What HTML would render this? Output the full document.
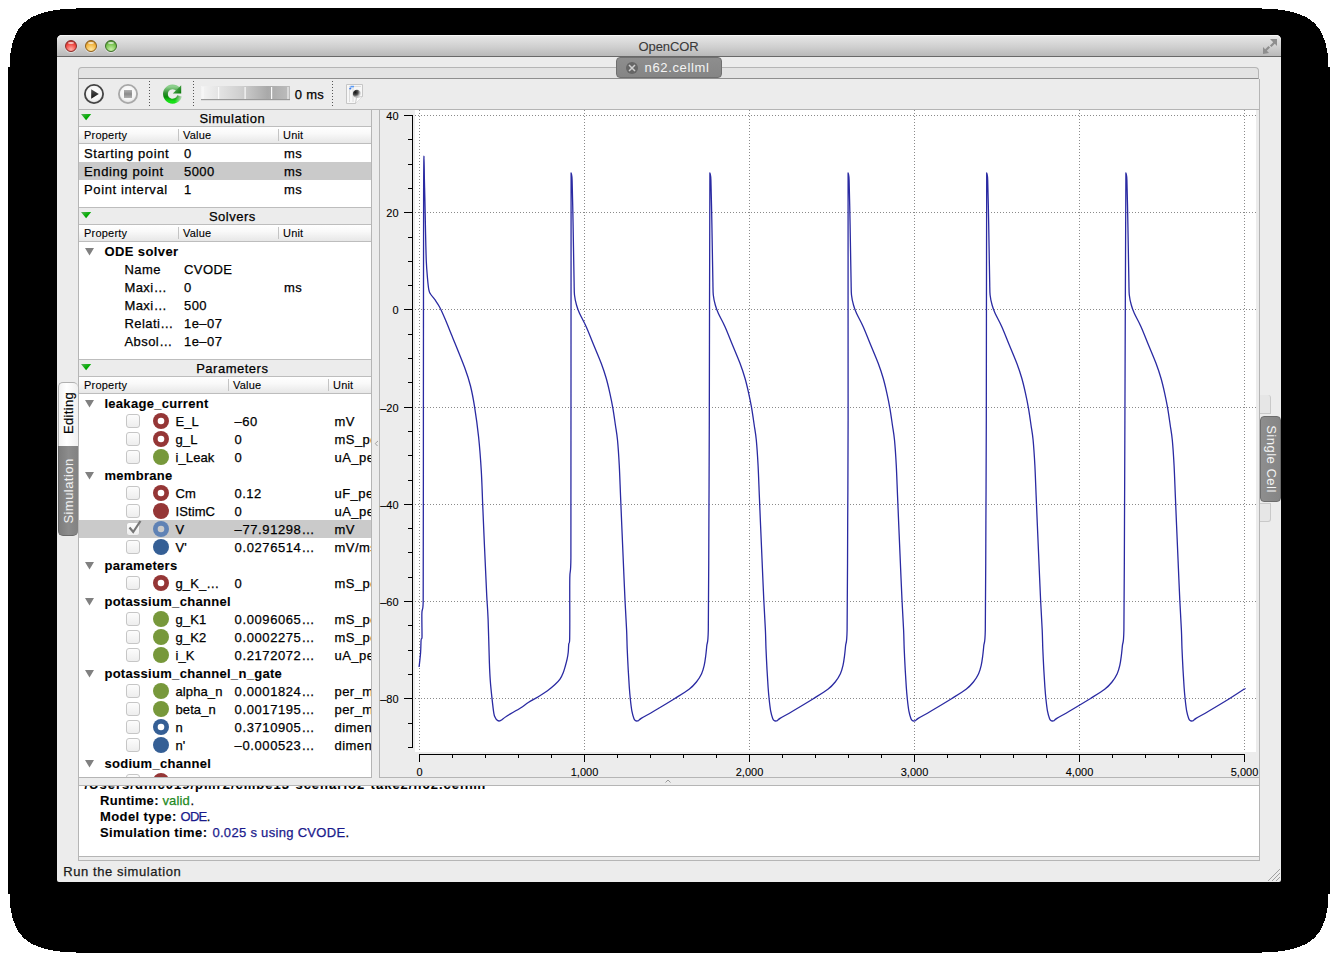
<!DOCTYPE html><html><head><meta charset="utf-8"><style>
html,body{margin:0;padding:0;width:1338px;height:961px;overflow:hidden;background:#fff;position:relative;}
.t{position:absolute;white-space:nowrap;font-family:"Liberation Sans",sans-serif;}
.r{position:absolute;box-sizing:border-box;}
svg{position:absolute;left:0;top:0;}
</style></head><body>
<svg width="1338" height="961"><path d="M1262,8 L1262,9 L1278,9 L1278,10 L1285,10 L1285,11 L1290,11 L1290,12 L1294,12 L1294,13 L1297,13 L1297,14 L1300,14 L1300,15 L1302,15 L1302,16 L1305,16 L1305,17 L1307,17 L1307,18 L1308,18 L1308,19 L1310,19 L1310,20 L1311,20 L1311,21 L1312,21 L1312,22 L1314,22 L1314,23 L1315,23 L1315,24 L1316,24 L1316,25 L1316,25 L1316,26 L1317,26 L1317,27 L1318,27 L1318,28 L1319,28 L1319,29 L1320,29 L1320,30 L1320,30 L1320,31 L1321,31 L1321,32 L1321,32 L1321,33 L1322,33 L1322,34 L1322,34 L1322,35 L1323,35 L1323,36 L1323,36 L1323,37 L1323,37 L1323,38 L1324,38 L1324,39 L1324,39 L1324,40 L1325,40 L1325,41 L1325,41 L1325,42 L1325,42 L1325,43 L1326,43 L1326,44 L1326,44 L1326,45 L1326,45 L1326,46 L1326,46 L1326,47 L1326,47 L1326,48 L1327,48 L1327,49 L1327,49 L1327,50 L1327,50 L1327,51 L1327,51 L1327,52 L1327,52 L1327,53 L1328,53 L1328,54 L1328,54 L1328,55 L1328,55 L1328,56 L1328,56 L1328,57 L1328,57 L1328,58 L1328,58 L1328,59 L1328,59 L1328,60 L1328,60 L1328,61 L1328,61 L1328,62 L1328,62 L1328,63 L1328,63 L1328,64 L1328,64 L1328,65 L1328,65 L1328,66 L1328,66 L1328,67 L1330,67 L1330,894 L1328,894 L1328,895 L1328,895 L1328,896 L1328,896 L1328,897 L1328,897 L1328,898 L1328,898 L1328,899 L1328,899 L1328,900 L1328,900 L1328,901 L1328,901 L1328,902 L1328,902 L1328,903 L1328,903 L1328,904 L1328,904 L1328,905 L1328,905 L1328,906 L1328,906 L1328,907 L1328,907 L1328,908 L1327,908 L1327,909 L1327,909 L1327,910 L1327,910 L1327,911 L1327,911 L1327,912 L1327,912 L1327,913 L1326,913 L1326,914 L1326,914 L1326,915 L1326,915 L1326,916 L1326,916 L1326,917 L1326,917 L1326,918 L1325,918 L1325,919 L1325,919 L1325,920 L1325,920 L1325,921 L1324,921 L1324,922 L1324,922 L1324,923 L1323,923 L1323,924 L1323,924 L1323,925 L1323,925 L1323,926 L1322,926 L1322,927 L1322,927 L1322,928 L1321,928 L1321,929 L1321,929 L1321,930 L1320,930 L1320,931 L1320,931 L1320,932 L1319,932 L1319,933 L1318,933 L1318,934 L1317,934 L1317,935 L1316,935 L1316,936 L1316,936 L1316,937 L1315,937 L1315,938 L1314,938 L1314,939 L1312,939 L1312,940 L1311,940 L1311,941 L1310,941 L1310,942 L1308,942 L1308,943 L1307,943 L1307,944 L1305,944 L1305,945 L1302,945 L1302,946 L1300,946 L1300,947 L1297,947 L1297,948 L1294,948 L1294,949 L1290,949 L1290,950 L1285,950 L1285,951 L1278,951 L1278,952 L1262,952 L1262,953 L76,953 L76,952 L60,952 L60,951 L53,951 L53,950 L48,950 L48,949 L44,949 L44,948 L41,948 L41,947 L38,947 L38,946 L36,946 L36,945 L33,945 L33,944 L31,944 L31,943 L30,943 L30,942 L28,942 L28,941 L27,941 L27,940 L26,940 L26,939 L24,939 L24,938 L23,938 L23,937 L22,937 L22,936 L22,936 L22,935 L21,935 L21,934 L20,934 L20,933 L19,933 L19,932 L18,932 L18,931 L18,931 L18,930 L17,930 L17,929 L17,929 L17,928 L16,928 L16,927 L16,927 L16,926 L15,926 L15,925 L15,925 L15,924 L15,924 L15,923 L14,923 L14,922 L14,922 L14,921 L13,921 L13,920 L13,920 L13,919 L13,919 L13,918 L12,918 L12,917 L12,917 L12,916 L12,916 L12,915 L12,915 L12,914 L12,914 L12,913 L11,913 L11,912 L11,912 L11,911 L11,911 L11,910 L11,910 L11,909 L11,909 L11,908 L10,908 L10,907 L10,907 L10,906 L10,906 L10,905 L10,905 L10,904 L10,904 L10,903 L10,903 L10,902 L10,902 L10,901 L10,901 L10,900 L10,900 L10,899 L10,899 L10,898 L10,898 L10,897 L10,897 L10,896 L10,896 L10,895 L10,895 L10,894 L8,894 L8,67 L10,67 L10,66 L10,66 L10,65 L10,65 L10,64 L10,64 L10,63 L10,63 L10,62 L10,62 L10,61 L10,61 L10,60 L10,60 L10,59 L10,59 L10,58 L10,58 L10,57 L10,57 L10,56 L10,56 L10,55 L10,55 L10,54 L10,54 L10,53 L11,53 L11,52 L11,52 L11,51 L11,51 L11,50 L11,50 L11,49 L11,49 L11,48 L12,48 L12,47 L12,47 L12,46 L12,46 L12,45 L12,45 L12,44 L12,44 L12,43 L13,43 L13,42 L13,42 L13,41 L13,41 L13,40 L14,40 L14,39 L14,39 L14,38 L15,38 L15,37 L15,37 L15,36 L15,36 L15,35 L16,35 L16,34 L16,34 L16,33 L17,33 L17,32 L17,32 L17,31 L18,31 L18,30 L18,30 L18,29 L19,29 L19,28 L20,28 L20,27 L21,27 L21,26 L22,26 L22,25 L22,25 L22,24 L23,24 L23,23 L24,23 L24,22 L26,22 L26,21 L27,21 L27,20 L28,20 L28,19 L30,19 L30,18 L31,18 L31,17 L33,17 L33,16 L36,16 L36,15 L38,15 L38,14 L41,14 L41,13 L44,13 L44,12 L48,12 L48,11 L53,11 L53,10 L60,10 L60,9 L76,9 L76,8 Z" fill="#000" shape-rendering="crispEdges"/></svg>
<div class="r" style="left:57px;top:35px;width:1224px;height:847px;background:#ececec;border-radius:5px 5px 2px 2px;overflow:hidden;"></div>
<div class="r" style="left:57px;top:35px;width:1224px;height:22px;background:linear-gradient(#e8e8e8,#d0d0d0 55%,#b9b9b9);border-radius:5px 5px 0 0;border-bottom:1px solid #686868;box-shadow:inset 0 1px 0 #f6f6f6;"></div>
<div class="r" style="left:65px;top:40px;width:12px;height:12px;border-radius:50%;background:radial-gradient(circle at 50% 85%, #ffb0a8 0%, #f0453e 60%, #8c2a26 100%);border:1px solid #8c2a26;box-shadow:0 1px 1px rgba(255,255,255,0.5);"></div>
<div class="r" style="left:68px;top:41.5px;width:6px;height:2.5px;border-radius:50%;background:rgba(255,255,255,0.65);"></div>
<div class="r" style="left:85px;top:40px;width:12px;height:12px;border-radius:50%;background:radial-gradient(circle at 50% 85%, #ffe7a0 0%, #f2b33d 60%, #8f5e17 100%);border:1px solid #8f5e17;box-shadow:0 1px 1px rgba(255,255,255,0.5);"></div>
<div class="r" style="left:88px;top:41.5px;width:6px;height:2.5px;border-radius:50%;background:rgba(255,255,255,0.65);"></div>
<div class="r" style="left:105px;top:40px;width:12px;height:12px;border-radius:50%;background:radial-gradient(circle at 50% 85%, #c8f0a8 0%, #77c34e 60%, #3a6d25 100%);border:1px solid #3a6d25;box-shadow:0 1px 1px rgba(255,255,255,0.5);"></div>
<div class="r" style="left:108px;top:41.5px;width:6px;height:2.5px;border-radius:50%;background:rgba(255,255,255,0.65);"></div>
<div class="t" style="left:638.50px;top:40.00px;font-size:13px;line-height:13px;font-weight:400;color:#3a3a3a;letter-spacing:-0.098px;-webkit-text-stroke:0.1px currentColor;">OpenCOR</div>
<svg width="1338" height="961" style="pointer-events:none"><g fill="#8e8e8e">
<path d="M1270,39 L1277,39 L1277,46 L1274.8,43.8 L1271.5,47.1 L1269.9,45.5 L1273.2,42.2 Z"/>
<path d="M1263,53 L1263,46 L1265.2,48.2 L1268.5,44.9 L1270.1,46.5 L1266.8,49.8 L1269,52 Z" transform="translate(0,1)"/>
</g></svg>
<div class="r" style="left:78px;top:67px;width:1181px;height:12px;background:#e3e3e3;border:1px solid #b5b5b5;border-bottom:1px solid #8e8e8e;border-radius:4px 4px 0 0;"></div>
<div class="r" style="left:616px;top:57px;width:106px;height:21px;background:linear-gradient(#8e8e8e,#858585);border:1px solid #6f6f6f;border-radius:4px;"></div>
<div class="r" style="left:626px;top:62px;width:12px;height:12px;border-radius:50%;background:#666;"></div>
<svg width="1338" height="961"><path d="M629,65 L635,71 M635,65 L629,71" stroke="#cfcfcf" stroke-width="1.5"/></svg>
<div class="t" style="left:644.50px;top:61.00px;font-size:13px;line-height:13px;font-weight:400;color:#f4f4f4;letter-spacing:0.648px;-webkit-text-stroke:0;">n62.cellml</div>
<div class="r" style="left:78px;top:79px;width:1182px;height:782px;border:1px solid #b5b5b5;border-top:none;background:#ececec;"></div>
<div class="r" style="left:79px;top:109px;width:1180px;height:1px;background:#b4b4b4;"></div>
<svg width="1338" height="961"><defs>
<radialGradient id="btnfill" cx="50%" cy="40%" r="60%"><stop offset="0" stop-color="#ffffff"/><stop offset="0.7" stop-color="#f4f4f4"/><stop offset="1" stop-color="#d8d8d8"/></radialGradient>
<linearGradient id="playtri" x1="0" y1="0" x2="0" y2="1"><stop offset="0" stop-color="#555"/><stop offset="1" stop-color="#111"/></linearGradient>
<linearGradient id="stopsq" x1="0" y1="0" x2="0" y2="1"><stop offset="0" stop-color="#b0b0b0"/><stop offset="0.5" stop-color="#8a8a8a"/><stop offset="1" stop-color="#b0b0b0"/></linearGradient>
<radialGradient id="refg" cx="50%" cy="85%" r="70%"><stop offset="0" stop-color="#22e022"/><stop offset="0.6" stop-color="#139a13"/><stop offset="1" stop-color="#0b6a0b"/></radialGradient>
<linearGradient id="slid" x1="0" y1="0" x2="1" y2="0"><stop offset="0" stop-color="#f4f4f4"/><stop offset="0.45" stop-color="#cfcfcf"/><stop offset="0.75" stop-color="#a9a9a9"/><stop offset="1" stop-color="#bdbdbd"/></linearGradient>
</defs>
<circle cx="94" cy="94" r="9.1" fill="url(#btnfill)" stroke="#444" stroke-width="1.8"/>
<path d="M91.2,89.3 L98.8,94 L91.2,98.8 Z" fill="url(#playtri)"/>
<circle cx="128" cy="94" r="9.1" fill="url(#btnfill)" stroke="#a8a8a8" stroke-width="1.8"/>
<rect x="124" y="90" width="8" height="8" fill="url(#stopsq)"/>
<g fill="#555">
<rect x="149" y="81" width="1" height="1"/>
<rect x="149" y="84" width="1" height="1"/>
<rect x="149" y="87" width="1" height="1"/>
<rect x="149" y="90" width="1" height="1"/>
<rect x="149" y="93" width="1" height="1"/>
<rect x="149" y="96" width="1" height="1"/>
<rect x="149" y="99" width="1" height="1"/>
<rect x="149" y="102" width="1" height="1"/>
<rect x="149" y="105" width="1" height="1"/>
<rect x="193" y="81" width="1" height="1"/>
<rect x="193" y="84" width="1" height="1"/>
<rect x="193" y="87" width="1" height="1"/>
<rect x="193" y="90" width="1" height="1"/>
<rect x="193" y="93" width="1" height="1"/>
<rect x="193" y="96" width="1" height="1"/>
<rect x="193" y="99" width="1" height="1"/>
<rect x="193" y="102" width="1" height="1"/>
<rect x="193" y="105" width="1" height="1"/>
<rect x="332" y="81" width="1" height="1"/>
<rect x="332" y="84" width="1" height="1"/>
<rect x="332" y="87" width="1" height="1"/>
<rect x="332" y="90" width="1" height="1"/>
<rect x="332" y="93" width="1" height="1"/>
<rect x="332" y="96" width="1" height="1"/>
<rect x="332" y="99" width="1" height="1"/>
<rect x="332" y="102" width="1" height="1"/>
<rect x="332" y="105" width="1" height="1"/>
</g>
<defs><linearGradient id="refl" x1="0" y1="0" x2="0" y2="1"><stop offset="0" stop-color="#8ccf8c"/><stop offset="0.45" stop-color="#2f8f2f"/><stop offset="0.7" stop-color="#0a8a0a"/><stop offset="1" stop-color="#18e018"/></linearGradient>
<linearGradient id="refa" x1="0" y1="0" x2="1" y2="1"><stop offset="0" stop-color="#6fc06f"/><stop offset="1" stop-color="#067406"/></linearGradient>
<linearGradient id="fade" x1="0" y1="0" x2="1" y2="0"><stop offset="0" stop-color="#ececec" stop-opacity="0"/><stop offset="1" stop-color="#ececec" stop-opacity="0.95"/></linearGradient></defs>
<path d="M179.6,95.8 A7.2,7.2 0 1 1 178.0,89.2" fill="none" stroke="url(#refl)" stroke-width="4.8"/>
<path d="M172.8,93.6 L181.2,93.6 L181.2,85.2 Z" fill="url(#refa)"/>
<rect x="175" y="94.2" width="8" height="10" fill="url(#fade)"/>
<rect x="201" y="86" width="89" height="14" fill="url(#slid)"/>
<rect x="201" y="99" width="89" height="1.2" fill="#999"/>
<g fill="#fafafa">
<rect x="202.5" y="87" width="1" height="12"/><rect x="218" y="87" width="1.2" height="12"/><rect x="244.5" y="87" width="1.2" height="12"/><rect x="271" y="87" width="1.2" height="12"/><rect x="287.5" y="87" width="1" height="12"/>
</g>
<defs><radialGradient id="blob" cx="30%" cy="30%" r="75%"><stop offset="0" stop-color="#111" stop-opacity="1"/><stop offset="0.45" stop-color="#333" stop-opacity="0.85"/><stop offset="1" stop-color="#999" stop-opacity="0"/></radialGradient></defs>
<path d="M346.5,84.5 H362.5 V96.5 L355.5,103.5 H346.5 Z" fill="#f7f7f7" stroke="#c6c6c6" stroke-width="1"/>
<path d="M355.5,103.5 L356.5,97.5 L362.5,96.5" fill="#fdfdfd" stroke="#bdbdbd" stroke-width="0.8"/>
<g stroke="#dcdcdc" stroke-width="1"><path d="M349.5,88 V102 M353,88 V102 M349,86.5 H361"/></g>
<rect x="350.5" y="85.8" width="3.5" height="1.6" fill="#5b9cf5"/><circle cx="350.3" cy="88.5" r="1.1" fill="#3d7ff0"/>
<ellipse cx="357" cy="94" rx="4.2" ry="4.2" fill="url(#blob)"/>
</svg>
<div class="t" style="left:294.70px;top:88.00px;font-size:13px;line-height:13px;font-weight:400;color:#000;letter-spacing:0.332px;-webkit-text-stroke:0.25px currentColor;">0 ms</div>
<div class="r" style="left:78px;top:109px;width:294px;height:669px;background:#fff;border-left:1px solid #b5b5b5;border-right:1px solid #b5b5b5;"></div>
<div class="r" style="left:79px;top:109px;width:292px;height:1px;background:#b4b4b4;"></div>
<div class="r" style="left:79px;top:110px;width:292px;height:16px;background:#ececec;"></div>
<div class="r" style="left:79px;top:126px;width:292px;height:1px;background:#bdbdbd;"></div>
<div class="r" style="left:79px;top:127px;width:292px;height:16px;background:linear-gradient(#ffffff,#f9f9f9 40%,#e7e7e7);"></div>
<div class="r" style="left:79px;top:143px;width:292px;height:1px;background:#bdbdbd;"></div>
<svg width="1338" height="961"><defs><linearGradient id="gt110" x1="0" y1="0" x2="1" y2="1"><stop offset="0" stop-color="#5fae5f"/><stop offset="0.5" stop-color="#08b008"/><stop offset="1" stop-color="#007a00"/></linearGradient></defs><path d="M81,114 L91.2,114 L86.1,120.2 Z" fill="url(#gt110)"/><rect x="178" y="129" width="1" height="12" fill="#c4c4c4"/><rect x="278" y="129" width="1" height="12" fill="#c4c4c4"/></svg>
<div class="t" style="left:199.45px;top:112.00px;font-size:13px;line-height:13px;font-weight:400;color:#000;letter-spacing:0.500px;-webkit-text-stroke:0.25px currentColor;">Simulation</div>
<div class="t" style="left:84.00px;top:129.69px;font-size:11px;line-height:11px;font-weight:400;color:#000;letter-spacing:0.216px;-webkit-text-stroke:0.1px currentColor;">Property</div>
<div class="t" style="left:183.00px;top:129.69px;font-size:11px;line-height:11px;font-weight:400;color:#000;letter-spacing:0.200px;-webkit-text-stroke:0.1px currentColor;">Value</div>
<div class="t" style="left:283.00px;top:129.69px;font-size:11px;line-height:11px;font-weight:400;color:#000;letter-spacing:0.200px;-webkit-text-stroke:0.1px currentColor;">Unit</div>
<div class="r" style="left:79px;top:207px;width:292px;height:1px;background:#bdbdbd;"></div>
<div class="r" style="left:79px;top:208px;width:292px;height:16px;background:#ececec;"></div>
<div class="r" style="left:79px;top:224px;width:292px;height:1px;background:#bdbdbd;"></div>
<div class="r" style="left:79px;top:225px;width:292px;height:16px;background:linear-gradient(#ffffff,#f9f9f9 40%,#e7e7e7);"></div>
<div class="r" style="left:79px;top:241px;width:292px;height:1px;background:#bdbdbd;"></div>
<svg width="1338" height="961"><defs><linearGradient id="gt208" x1="0" y1="0" x2="1" y2="1"><stop offset="0" stop-color="#5fae5f"/><stop offset="0.5" stop-color="#08b008"/><stop offset="1" stop-color="#007a00"/></linearGradient></defs><path d="M81,212 L91.2,212 L86.1,218.2 Z" fill="url(#gt208)"/><rect x="178" y="227" width="1" height="12" fill="#c4c4c4"/><rect x="278" y="227" width="1" height="12" fill="#c4c4c4"/></svg>
<div class="t" style="left:208.88px;top:210.00px;font-size:13px;line-height:13px;font-weight:400;color:#000;letter-spacing:0.500px;-webkit-text-stroke:0.25px currentColor;">Solvers</div>
<div class="t" style="left:84.00px;top:227.69px;font-size:11px;line-height:11px;font-weight:400;color:#000;letter-spacing:0.216px;-webkit-text-stroke:0.1px currentColor;">Property</div>
<div class="t" style="left:183.00px;top:227.69px;font-size:11px;line-height:11px;font-weight:400;color:#000;letter-spacing:0.200px;-webkit-text-stroke:0.1px currentColor;">Value</div>
<div class="t" style="left:283.00px;top:227.69px;font-size:11px;line-height:11px;font-weight:400;color:#000;letter-spacing:0.200px;-webkit-text-stroke:0.1px currentColor;">Unit</div>
<div class="r" style="left:79px;top:359px;width:292px;height:1px;background:#bdbdbd;"></div>
<div class="r" style="left:79px;top:360px;width:292px;height:16px;background:#ececec;"></div>
<div class="r" style="left:79px;top:376px;width:292px;height:1px;background:#bdbdbd;"></div>
<div class="r" style="left:79px;top:377px;width:292px;height:16px;background:linear-gradient(#ffffff,#f9f9f9 40%,#e7e7e7);"></div>
<div class="r" style="left:79px;top:393px;width:292px;height:1px;background:#bdbdbd;"></div>
<svg width="1338" height="961"><defs><linearGradient id="gt360" x1="0" y1="0" x2="1" y2="1"><stop offset="0" stop-color="#5fae5f"/><stop offset="0.5" stop-color="#08b008"/><stop offset="1" stop-color="#007a00"/></linearGradient></defs><path d="M81,364 L91.2,364 L86.1,370.2 Z" fill="url(#gt360)"/><rect x="228" y="379" width="1" height="12" fill="#c4c4c4"/><rect x="328" y="379" width="1" height="12" fill="#c4c4c4"/></svg>
<div class="t" style="left:196.20px;top:362.00px;font-size:13px;line-height:13px;font-weight:400;color:#000;letter-spacing:0.500px;-webkit-text-stroke:0.25px currentColor;">Parameters</div>
<div class="t" style="left:84.00px;top:379.69px;font-size:11px;line-height:11px;font-weight:400;color:#000;letter-spacing:0.216px;-webkit-text-stroke:0.1px currentColor;">Property</div>
<div class="t" style="left:233.00px;top:379.69px;font-size:11px;line-height:11px;font-weight:400;color:#000;letter-spacing:0.200px;-webkit-text-stroke:0.1px currentColor;">Value</div>
<div class="t" style="left:333.00px;top:379.69px;font-size:11px;line-height:11px;font-weight:400;color:#000;letter-spacing:0.200px;-webkit-text-stroke:0.1px currentColor;">Unit</div>
<div class="r" style="left:79px;top:777px;width:292px;height:1px;background:#b5b5b5;"></div>
<div class="r" style="left:79px;top:162px;width:292px;height:18px;background:#cacaca;"></div>
<div class="t" style="left:84.00px;top:147.00px;font-size:13px;line-height:13px;font-weight:400;color:#000;letter-spacing:0.620px;-webkit-text-stroke:0.25px currentColor;">Starting point</div>
<div class="t" style="left:184.00px;top:147.00px;font-size:13px;line-height:13px;font-weight:400;color:#000;letter-spacing:0.450px;-webkit-text-stroke:0.25px currentColor;">0</div>
<div class="t" style="left:284.00px;top:147.00px;font-size:13px;line-height:13px;font-weight:400;color:#000;letter-spacing:0.450px;-webkit-text-stroke:0.25px currentColor;">ms</div>
<div class="t" style="left:84.00px;top:165.00px;font-size:13px;line-height:13px;font-weight:400;color:#000;letter-spacing:0.620px;-webkit-text-stroke:0.25px currentColor;">Ending point</div>
<div class="t" style="left:184.00px;top:165.00px;font-size:13px;line-height:13px;font-weight:400;color:#000;letter-spacing:0.450px;-webkit-text-stroke:0.25px currentColor;">5000</div>
<div class="t" style="left:284.00px;top:165.00px;font-size:13px;line-height:13px;font-weight:400;color:#000;letter-spacing:0.450px;-webkit-text-stroke:0.25px currentColor;">ms</div>
<div class="t" style="left:84.00px;top:183.00px;font-size:13px;line-height:13px;font-weight:400;color:#000;letter-spacing:0.620px;-webkit-text-stroke:0.25px currentColor;">Point interval</div>
<div class="t" style="left:184.00px;top:183.00px;font-size:13px;line-height:13px;font-weight:400;color:#000;letter-spacing:0.450px;-webkit-text-stroke:0.25px currentColor;">1</div>
<div class="t" style="left:284.00px;top:183.00px;font-size:13px;line-height:13px;font-weight:400;color:#000;letter-spacing:0.450px;-webkit-text-stroke:0.25px currentColor;">ms</div>
<svg width="1338" height="961"><path d="M85,248 L94,248 L89.5,255.5 Z" fill="#808080"/></svg>
<div class="t" style="left:104.40px;top:245.00px;font-size:13px;line-height:13px;font-weight:700;color:#000;letter-spacing:0.400px;-webkit-text-stroke:0.1px currentColor;">ODE solver</div>
<div class="t" style="left:124.40px;top:263.00px;font-size:13px;line-height:13px;font-weight:400;color:#000;letter-spacing:0.450px;-webkit-text-stroke:0.25px currentColor;">Name</div>
<div class="t" style="left:184.00px;top:263.00px;font-size:13px;line-height:13px;font-weight:400;color:#000;letter-spacing:0.450px;-webkit-text-stroke:0.25px currentColor;">CVODE</div>
<div class="t" style="left:124.40px;top:281.00px;font-size:13px;line-height:13px;font-weight:400;color:#000;letter-spacing:0.450px;-webkit-text-stroke:0.25px currentColor;">Maxi…</div>
<div class="t" style="left:184.00px;top:281.00px;font-size:13px;line-height:13px;font-weight:400;color:#000;letter-spacing:0.450px;-webkit-text-stroke:0.25px currentColor;">0</div>
<div class="t" style="left:284.00px;top:281.00px;font-size:13px;line-height:13px;font-weight:400;color:#000;letter-spacing:0.450px;-webkit-text-stroke:0.25px currentColor;">ms</div>
<div class="t" style="left:124.40px;top:299.00px;font-size:13px;line-height:13px;font-weight:400;color:#000;letter-spacing:0.450px;-webkit-text-stroke:0.25px currentColor;">Maxi…</div>
<div class="t" style="left:184.00px;top:299.00px;font-size:13px;line-height:13px;font-weight:400;color:#000;letter-spacing:0.450px;-webkit-text-stroke:0.25px currentColor;">500</div>
<div class="t" style="left:124.40px;top:317.00px;font-size:13px;line-height:13px;font-weight:400;color:#000;letter-spacing:0.450px;-webkit-text-stroke:0.25px currentColor;">Relati…</div>
<div class="t" style="left:184.00px;top:317.00px;font-size:13px;line-height:13px;font-weight:400;color:#000;letter-spacing:0.450px;-webkit-text-stroke:0.25px currentColor;">1e–07</div>
<div class="t" style="left:124.40px;top:335.00px;font-size:13px;line-height:13px;font-weight:400;color:#000;letter-spacing:0.450px;-webkit-text-stroke:0.25px currentColor;">Absol…</div>
<div class="t" style="left:184.00px;top:335.00px;font-size:13px;line-height:13px;font-weight:400;color:#000;letter-spacing:0.450px;-webkit-text-stroke:0.25px currentColor;">1e–07</div>
<div style="position:absolute;left:0;top:0;width:1338px;height:961px;clip-path:inset(394px 967px 184px 79px);">
<div class="r" style="left:79px;top:520px;width:292px;height:18px;background:#cacaca;"></div>
<div class="t" style="left:104.40px;top:397.00px;font-size:13px;line-height:13px;font-weight:700;color:#000;letter-spacing:0.300px;-webkit-text-stroke:0.1px currentColor;">leakage_current</div>
<div class="t" style="left:175.50px;top:415.00px;font-size:13px;line-height:13px;font-weight:400;color:#000;letter-spacing:0.100px;-webkit-text-stroke:0.25px currentColor;">E_L</div>
<div class="t" style="left:234.60px;top:415.00px;font-size:13px;line-height:13px;font-weight:400;color:#000;letter-spacing:0.450px;-webkit-text-stroke:0.25px currentColor;">–60</div>
<div class="t" style="left:334.50px;top:415.00px;font-size:13px;line-height:13px;font-weight:400;color:#000;letter-spacing:0.450px;-webkit-text-stroke:0.25px currentColor;">mV</div>
<div class="t" style="left:175.50px;top:433.00px;font-size:13px;line-height:13px;font-weight:400;color:#000;letter-spacing:0.100px;-webkit-text-stroke:0.25px currentColor;">g_L</div>
<div class="t" style="left:234.60px;top:433.00px;font-size:13px;line-height:13px;font-weight:400;color:#000;letter-spacing:0.450px;-webkit-text-stroke:0.25px currentColor;">0</div>
<div class="t" style="left:334.50px;top:433.00px;font-size:13px;line-height:13px;font-weight:400;color:#000;letter-spacing:0.450px;-webkit-text-stroke:0.25px currentColor;">mS_per_cm2</div>
<div class="t" style="left:175.50px;top:451.00px;font-size:13px;line-height:13px;font-weight:400;color:#000;letter-spacing:0.100px;-webkit-text-stroke:0.25px currentColor;">i_Leak</div>
<div class="t" style="left:234.60px;top:451.00px;font-size:13px;line-height:13px;font-weight:400;color:#000;letter-spacing:0.450px;-webkit-text-stroke:0.25px currentColor;">0</div>
<div class="t" style="left:334.50px;top:451.00px;font-size:13px;line-height:13px;font-weight:400;color:#000;letter-spacing:0.450px;-webkit-text-stroke:0.25px currentColor;">uA_per_cm2</div>
<div class="t" style="left:104.40px;top:469.00px;font-size:13px;line-height:13px;font-weight:700;color:#000;letter-spacing:0.300px;-webkit-text-stroke:0.1px currentColor;">membrane</div>
<div class="t" style="left:175.50px;top:487.00px;font-size:13px;line-height:13px;font-weight:400;color:#000;letter-spacing:0.100px;-webkit-text-stroke:0.25px currentColor;">Cm</div>
<div class="t" style="left:234.60px;top:487.00px;font-size:13px;line-height:13px;font-weight:400;color:#000;letter-spacing:0.450px;-webkit-text-stroke:0.25px currentColor;">0.12</div>
<div class="t" style="left:334.50px;top:487.00px;font-size:13px;line-height:13px;font-weight:400;color:#000;letter-spacing:0.450px;-webkit-text-stroke:0.25px currentColor;">uF_per_cm2</div>
<div class="t" style="left:175.50px;top:505.00px;font-size:13px;line-height:13px;font-weight:400;color:#000;letter-spacing:0.100px;-webkit-text-stroke:0.25px currentColor;">IStimC</div>
<div class="t" style="left:234.60px;top:505.00px;font-size:13px;line-height:13px;font-weight:400;color:#000;letter-spacing:0.450px;-webkit-text-stroke:0.25px currentColor;">0</div>
<div class="t" style="left:334.50px;top:505.00px;font-size:13px;line-height:13px;font-weight:400;color:#000;letter-spacing:0.450px;-webkit-text-stroke:0.25px currentColor;">uA_per_cm2</div>
<div class="t" style="left:175.50px;top:523.00px;font-size:13px;line-height:13px;font-weight:400;color:#000;letter-spacing:0.100px;-webkit-text-stroke:0.25px currentColor;">V</div>
<div class="t" style="left:234.60px;top:523.00px;font-size:13px;line-height:13px;font-weight:400;color:#000;letter-spacing:0.600px;-webkit-text-stroke:0.25px currentColor;">–77.91298…</div>
<div class="t" style="left:334.50px;top:523.00px;font-size:13px;line-height:13px;font-weight:400;color:#000;letter-spacing:0.450px;-webkit-text-stroke:0.25px currentColor;">mV</div>
<div class="t" style="left:175.50px;top:541.00px;font-size:13px;line-height:13px;font-weight:400;color:#000;letter-spacing:0.100px;-webkit-text-stroke:0.25px currentColor;">V'</div>
<div class="t" style="left:234.60px;top:541.00px;font-size:13px;line-height:13px;font-weight:400;color:#000;letter-spacing:0.600px;-webkit-text-stroke:0.25px currentColor;">0.0276514…</div>
<div class="t" style="left:334.50px;top:541.00px;font-size:13px;line-height:13px;font-weight:400;color:#000;letter-spacing:0.450px;-webkit-text-stroke:0.25px currentColor;">mV/ms</div>
<div class="t" style="left:104.40px;top:559.00px;font-size:13px;line-height:13px;font-weight:700;color:#000;letter-spacing:0.300px;-webkit-text-stroke:0.1px currentColor;">parameters</div>
<div class="t" style="left:175.50px;top:577.00px;font-size:13px;line-height:13px;font-weight:400;color:#000;letter-spacing:0.100px;-webkit-text-stroke:0.25px currentColor;">g_K_…</div>
<div class="t" style="left:234.60px;top:577.00px;font-size:13px;line-height:13px;font-weight:400;color:#000;letter-spacing:0.450px;-webkit-text-stroke:0.25px currentColor;">0</div>
<div class="t" style="left:334.50px;top:577.00px;font-size:13px;line-height:13px;font-weight:400;color:#000;letter-spacing:0.450px;-webkit-text-stroke:0.25px currentColor;">mS_per_cm2</div>
<div class="t" style="left:104.40px;top:595.00px;font-size:13px;line-height:13px;font-weight:700;color:#000;letter-spacing:0.300px;-webkit-text-stroke:0.1px currentColor;">potassium_channel</div>
<div class="t" style="left:175.50px;top:613.00px;font-size:13px;line-height:13px;font-weight:400;color:#000;letter-spacing:0.100px;-webkit-text-stroke:0.25px currentColor;">g_K1</div>
<div class="t" style="left:234.60px;top:613.00px;font-size:13px;line-height:13px;font-weight:400;color:#000;letter-spacing:0.600px;-webkit-text-stroke:0.25px currentColor;">0.0096065…</div>
<div class="t" style="left:334.50px;top:613.00px;font-size:13px;line-height:13px;font-weight:400;color:#000;letter-spacing:0.450px;-webkit-text-stroke:0.25px currentColor;">mS_per_cm2</div>
<div class="t" style="left:175.50px;top:631.00px;font-size:13px;line-height:13px;font-weight:400;color:#000;letter-spacing:0.100px;-webkit-text-stroke:0.25px currentColor;">g_K2</div>
<div class="t" style="left:234.60px;top:631.00px;font-size:13px;line-height:13px;font-weight:400;color:#000;letter-spacing:0.600px;-webkit-text-stroke:0.25px currentColor;">0.0002275…</div>
<div class="t" style="left:334.50px;top:631.00px;font-size:13px;line-height:13px;font-weight:400;color:#000;letter-spacing:0.450px;-webkit-text-stroke:0.25px currentColor;">mS_per_cm2</div>
<div class="t" style="left:175.50px;top:649.00px;font-size:13px;line-height:13px;font-weight:400;color:#000;letter-spacing:0.100px;-webkit-text-stroke:0.25px currentColor;">i_K</div>
<div class="t" style="left:234.60px;top:649.00px;font-size:13px;line-height:13px;font-weight:400;color:#000;letter-spacing:0.600px;-webkit-text-stroke:0.25px currentColor;">0.2172072…</div>
<div class="t" style="left:334.50px;top:649.00px;font-size:13px;line-height:13px;font-weight:400;color:#000;letter-spacing:0.450px;-webkit-text-stroke:0.25px currentColor;">uA_per_cm2</div>
<div class="t" style="left:104.40px;top:667.00px;font-size:13px;line-height:13px;font-weight:700;color:#000;letter-spacing:0.300px;-webkit-text-stroke:0.1px currentColor;">potassium_channel_n_gate</div>
<div class="t" style="left:175.50px;top:685.00px;font-size:13px;line-height:13px;font-weight:400;color:#000;letter-spacing:0.100px;-webkit-text-stroke:0.25px currentColor;">alpha_n</div>
<div class="t" style="left:234.60px;top:685.00px;font-size:13px;line-height:13px;font-weight:400;color:#000;letter-spacing:0.600px;-webkit-text-stroke:0.25px currentColor;">0.0001824…</div>
<div class="t" style="left:334.50px;top:685.00px;font-size:13px;line-height:13px;font-weight:400;color:#000;letter-spacing:0.450px;-webkit-text-stroke:0.25px currentColor;">per_ms</div>
<div class="t" style="left:175.50px;top:703.00px;font-size:13px;line-height:13px;font-weight:400;color:#000;letter-spacing:0.100px;-webkit-text-stroke:0.25px currentColor;">beta_n</div>
<div class="t" style="left:234.60px;top:703.00px;font-size:13px;line-height:13px;font-weight:400;color:#000;letter-spacing:0.600px;-webkit-text-stroke:0.25px currentColor;">0.0017195…</div>
<div class="t" style="left:334.50px;top:703.00px;font-size:13px;line-height:13px;font-weight:400;color:#000;letter-spacing:0.450px;-webkit-text-stroke:0.25px currentColor;">per_ms</div>
<div class="t" style="left:175.50px;top:721.00px;font-size:13px;line-height:13px;font-weight:400;color:#000;letter-spacing:0.100px;-webkit-text-stroke:0.25px currentColor;">n</div>
<div class="t" style="left:234.60px;top:721.00px;font-size:13px;line-height:13px;font-weight:400;color:#000;letter-spacing:0.600px;-webkit-text-stroke:0.25px currentColor;">0.3710905…</div>
<div class="t" style="left:334.50px;top:721.00px;font-size:13px;line-height:13px;font-weight:400;color:#000;letter-spacing:0.450px;-webkit-text-stroke:0.25px currentColor;">dimensionless</div>
<div class="t" style="left:175.50px;top:739.00px;font-size:13px;line-height:13px;font-weight:400;color:#000;letter-spacing:0.100px;-webkit-text-stroke:0.25px currentColor;">n'</div>
<div class="t" style="left:234.60px;top:739.00px;font-size:13px;line-height:13px;font-weight:400;color:#000;letter-spacing:0.600px;-webkit-text-stroke:0.25px currentColor;">–0.000523…</div>
<div class="t" style="left:334.50px;top:739.00px;font-size:13px;line-height:13px;font-weight:400;color:#000;letter-spacing:0.450px;-webkit-text-stroke:0.25px currentColor;">dimensionless</div>
<div class="t" style="left:104.40px;top:757.00px;font-size:13px;line-height:13px;font-weight:700;color:#000;letter-spacing:0.300px;-webkit-text-stroke:0.1px currentColor;">sodium_channel</div>
<div class="t" style="left:175.50px;top:775.00px;font-size:13px;line-height:13px;font-weight:400;color:#000;letter-spacing:0.100px;-webkit-text-stroke:0.25px currentColor;">E_Na</div>
<div class="t" style="left:234.60px;top:775.00px;font-size:13px;line-height:13px;font-weight:400;color:#000;letter-spacing:0.450px;-webkit-text-stroke:0.25px currentColor;">40</div>
<div class="t" style="left:334.50px;top:775.00px;font-size:13px;line-height:13px;font-weight:400;color:#000;letter-spacing:0.450px;-webkit-text-stroke:0.25px currentColor;">mV</div>
<svg width="1338" height="961"><defs><linearGradient id="cbg" x1="0" y1="0" x2="0" y2="1"><stop offset="0" stop-color="#fdfdfd"/><stop offset="1" stop-color="#ededed"/></linearGradient></defs><path d="M85,400 L94,400 L89.5,407.5 Z" fill="#808080"/><rect x="126.5" y="414.5" width="13" height="13" rx="2.5" fill="url(#cbg)" stroke="#c6c6c6" stroke-width="1"/><circle cx="161" cy="421" r="8" fill="#953636"/><circle cx="161" cy="421" r="3.3" fill="#ffffff"/><rect x="126.5" y="432.5" width="13" height="13" rx="2.5" fill="url(#cbg)" stroke="#c6c6c6" stroke-width="1"/><circle cx="161" cy="439" r="8" fill="#953636"/><circle cx="161" cy="439" r="3.3" fill="#ffffff"/><rect x="126.5" y="450.5" width="13" height="13" rx="2.5" fill="url(#cbg)" stroke="#c6c6c6" stroke-width="1"/><circle cx="161" cy="457" r="8" fill="#77983b"/><path d="M85,472 L94,472 L89.5,479.5 Z" fill="#808080"/><rect x="126.5" y="486.5" width="13" height="13" rx="2.5" fill="url(#cbg)" stroke="#c6c6c6" stroke-width="1"/><circle cx="161" cy="493" r="8" fill="#953636"/><circle cx="161" cy="493" r="3.3" fill="#ffffff"/><rect x="126.5" y="504.5" width="13" height="13" rx="2.5" fill="url(#cbg)" stroke="#c6c6c6" stroke-width="1"/><circle cx="161" cy="511" r="8" fill="#953636"/><rect x="126.5" y="522.5" width="13" height="13" rx="2.5" fill="url(#cbg)" stroke="#c6c6c6" stroke-width="1"/><path d="M129.5,527.5 L133.2,532 L140.5,521" fill="none" stroke="#777" stroke-width="2.2"/><circle cx="161" cy="529" r="8" fill="#5f82b5"/><circle cx="161" cy="529" r="3.3" fill="#cacaca"/><rect x="126.5" y="540.5" width="13" height="13" rx="2.5" fill="url(#cbg)" stroke="#c6c6c6" stroke-width="1"/><circle cx="161" cy="547" r="8" fill="#355f95"/><path d="M85,562 L94,562 L89.5,569.5 Z" fill="#808080"/><rect x="126.5" y="576.5" width="13" height="13" rx="2.5" fill="url(#cbg)" stroke="#c6c6c6" stroke-width="1"/><circle cx="161" cy="583" r="8" fill="#953636"/><circle cx="161" cy="583" r="3.3" fill="#ffffff"/><path d="M85,598 L94,598 L89.5,605.5 Z" fill="#808080"/><rect x="126.5" y="612.5" width="13" height="13" rx="2.5" fill="url(#cbg)" stroke="#c6c6c6" stroke-width="1"/><circle cx="161" cy="619" r="8" fill="#77983b"/><rect x="126.5" y="630.5" width="13" height="13" rx="2.5" fill="url(#cbg)" stroke="#c6c6c6" stroke-width="1"/><circle cx="161" cy="637" r="8" fill="#77983b"/><rect x="126.5" y="648.5" width="13" height="13" rx="2.5" fill="url(#cbg)" stroke="#c6c6c6" stroke-width="1"/><circle cx="161" cy="655" r="8" fill="#77983b"/><path d="M85,670 L94,670 L89.5,677.5 Z" fill="#808080"/><rect x="126.5" y="684.5" width="13" height="13" rx="2.5" fill="url(#cbg)" stroke="#c6c6c6" stroke-width="1"/><circle cx="161" cy="691" r="8" fill="#77983b"/><rect x="126.5" y="702.5" width="13" height="13" rx="2.5" fill="url(#cbg)" stroke="#c6c6c6" stroke-width="1"/><circle cx="161" cy="709" r="8" fill="#77983b"/><rect x="126.5" y="720.5" width="13" height="13" rx="2.5" fill="url(#cbg)" stroke="#c6c6c6" stroke-width="1"/><circle cx="161" cy="727" r="8" fill="#355f95"/><circle cx="161" cy="727" r="3.3" fill="#ffffff"/><rect x="126.5" y="738.5" width="13" height="13" rx="2.5" fill="url(#cbg)" stroke="#c6c6c6" stroke-width="1"/><circle cx="161" cy="745" r="8" fill="#355f95"/><path d="M85,760 L94,760 L89.5,767.5 Z" fill="#808080"/><rect x="126.5" y="774.5" width="13" height="13" rx="2.5" fill="url(#cbg)" stroke="#c6c6c6" stroke-width="1"/><circle cx="161" cy="781" r="8" fill="#953636"/><circle cx="161" cy="781" r="3.3" fill="#ffffff"/></svg>
</div>
<div class="r" style="left:379px;top:109px;width:881px;height:669px;background:#ececec;border-left:1px solid #b5b5b5;border-right:1px solid #b5b5b5;border-top:1px solid #b4b4b4;border-bottom:1px solid #b5b5b5;"></div>
<div class="r" style="left:415px;top:110px;width:841px;height:642px;background:#fff;"></div>
<svg width="1338" height="961" shape-rendering="crispEdges"><line x1="415" y1="115.5" x2="1256" y2="115.5" stroke="#8a8a8a" stroke-width="1" stroke-dasharray="1 2"/><line x1="415" y1="212.5" x2="1256" y2="212.5" stroke="#8a8a8a" stroke-width="1" stroke-dasharray="1 2"/><line x1="415" y1="309.5" x2="1256" y2="309.5" stroke="#8a8a8a" stroke-width="1" stroke-dasharray="1 2"/><line x1="415" y1="407.5" x2="1256" y2="407.5" stroke="#8a8a8a" stroke-width="1" stroke-dasharray="1 2"/><line x1="415" y1="504.5" x2="1256" y2="504.5" stroke="#8a8a8a" stroke-width="1" stroke-dasharray="1 2"/><line x1="415" y1="601.5" x2="1256" y2="601.5" stroke="#8a8a8a" stroke-width="1" stroke-dasharray="1 2"/><line x1="415" y1="698.5" x2="1256" y2="698.5" stroke="#8a8a8a" stroke-width="1" stroke-dasharray="1 2"/><line x1="419.5" y1="110" x2="419.5" y2="752" stroke="#8a8a8a" stroke-width="1" stroke-dasharray="1 2"/><line x1="584.5" y1="110" x2="584.5" y2="752" stroke="#8a8a8a" stroke-width="1" stroke-dasharray="1 2"/><line x1="749.5" y1="110" x2="749.5" y2="752" stroke="#8a8a8a" stroke-width="1" stroke-dasharray="1 2"/><line x1="914.5" y1="110" x2="914.5" y2="752" stroke="#8a8a8a" stroke-width="1" stroke-dasharray="1 2"/><line x1="1079.5" y1="110" x2="1079.5" y2="752" stroke="#8a8a8a" stroke-width="1" stroke-dasharray="1 2"/><line x1="1244.5" y1="110" x2="1244.5" y2="752" stroke="#8a8a8a" stroke-width="1" stroke-dasharray="1 2"/><rect x="412" y="115" width="1" height="633" fill="#000"/><rect x="404" y="115" width="8" height="1" fill="#000"/><rect x="408" y="139" width="4" height="1" fill="#000"/><rect x="408" y="164" width="4" height="1" fill="#000"/><rect x="408" y="188" width="4" height="1" fill="#000"/><rect x="404" y="212" width="8" height="1" fill="#000"/><rect x="408" y="237" width="4" height="1" fill="#000"/><rect x="408" y="261" width="4" height="1" fill="#000"/><rect x="408" y="285" width="4" height="1" fill="#000"/><rect x="404" y="309" width="8" height="1" fill="#000"/><rect x="408" y="334" width="4" height="1" fill="#000"/><rect x="408" y="358" width="4" height="1" fill="#000"/><rect x="408" y="382" width="4" height="1" fill="#000"/><rect x="404" y="407" width="8" height="1" fill="#000"/><rect x="408" y="431" width="4" height="1" fill="#000"/><rect x="408" y="455" width="4" height="1" fill="#000"/><rect x="408" y="480" width="4" height="1" fill="#000"/><rect x="404" y="504" width="8" height="1" fill="#000"/><rect x="408" y="528" width="4" height="1" fill="#000"/><rect x="408" y="552" width="4" height="1" fill="#000"/><rect x="408" y="577" width="4" height="1" fill="#000"/><rect x="404" y="601" width="8" height="1" fill="#000"/><rect x="408" y="625" width="4" height="1" fill="#000"/><rect x="408" y="650" width="4" height="1" fill="#000"/><rect x="408" y="674" width="4" height="1" fill="#000"/><rect x="404" y="698" width="8" height="1" fill="#000"/><rect x="408" y="723" width="4" height="1" fill="#000"/><rect x="408" y="747" width="4" height="1" fill="#000"/><rect x="419" y="754" width="826" height="1" fill="#000"/><rect x="419" y="755" width="1" height="7" fill="#000"/><rect x="452" y="755" width="1" height="3" fill="#000"/><rect x="485" y="755" width="1" height="3" fill="#000"/><rect x="518" y="755" width="1" height="3" fill="#000"/><rect x="551" y="755" width="1" height="3" fill="#000"/><rect x="584" y="755" width="1" height="7" fill="#000"/><rect x="617" y="755" width="1" height="3" fill="#000"/><rect x="650" y="755" width="1" height="3" fill="#000"/><rect x="683" y="755" width="1" height="3" fill="#000"/><rect x="716" y="755" width="1" height="3" fill="#000"/><rect x="749" y="755" width="1" height="7" fill="#000"/><rect x="782" y="755" width="1" height="3" fill="#000"/><rect x="815" y="755" width="1" height="3" fill="#000"/><rect x="848" y="755" width="1" height="3" fill="#000"/><rect x="881" y="755" width="1" height="3" fill="#000"/><rect x="914" y="755" width="1" height="7" fill="#000"/><rect x="947" y="755" width="1" height="3" fill="#000"/><rect x="980" y="755" width="1" height="3" fill="#000"/><rect x="1013" y="755" width="1" height="3" fill="#000"/><rect x="1046" y="755" width="1" height="3" fill="#000"/><rect x="1079" y="755" width="1" height="7" fill="#000"/><rect x="1112" y="755" width="1" height="3" fill="#000"/><rect x="1145" y="755" width="1" height="3" fill="#000"/><rect x="1178" y="755" width="1" height="3" fill="#000"/><rect x="1211" y="755" width="1" height="3" fill="#000"/><rect x="1244" y="755" width="1" height="7" fill="#000"/></svg>
<div class="t" style="left:386.37px;top:110.99px;font-size:11px;line-height:11px;font-weight:400;color:#000;letter-spacing:0.000px;-webkit-text-stroke:0.1px currentColor;">40</div>
<div class="t" style="left:386.37px;top:207.99px;font-size:11px;line-height:11px;font-weight:400;color:#000;letter-spacing:0.000px;-webkit-text-stroke:0.1px currentColor;">20</div>
<div class="t" style="left:392.48px;top:304.99px;font-size:11px;line-height:11px;font-weight:400;color:#000;letter-spacing:0.000px;-webkit-text-stroke:0.1px currentColor;">0</div>
<div class="t" style="left:380.25px;top:402.99px;font-size:11px;line-height:11px;font-weight:400;color:#000;letter-spacing:0.000px;-webkit-text-stroke:0.1px currentColor;">–20</div>
<div class="t" style="left:380.25px;top:499.99px;font-size:11px;line-height:11px;font-weight:400;color:#000;letter-spacing:0.000px;-webkit-text-stroke:0.1px currentColor;">–40</div>
<div class="t" style="left:380.25px;top:596.99px;font-size:11px;line-height:11px;font-weight:400;color:#000;letter-spacing:0.000px;-webkit-text-stroke:0.1px currentColor;">–60</div>
<div class="t" style="left:380.25px;top:693.99px;font-size:11px;line-height:11px;font-weight:400;color:#000;letter-spacing:0.000px;-webkit-text-stroke:0.1px currentColor;">–80</div>
<div class="t" style="left:416.44px;top:766.69px;font-size:11px;line-height:11px;font-weight:400;color:#000;letter-spacing:0.000px;-webkit-text-stroke:0.1px currentColor;">0</div>
<div class="t" style="left:570.74px;top:766.69px;font-size:11px;line-height:11px;font-weight:400;color:#000;letter-spacing:0.000px;-webkit-text-stroke:0.1px currentColor;">1,000</div>
<div class="t" style="left:735.74px;top:766.69px;font-size:11px;line-height:11px;font-weight:400;color:#000;letter-spacing:0.000px;-webkit-text-stroke:0.1px currentColor;">2,000</div>
<div class="t" style="left:900.74px;top:766.69px;font-size:11px;line-height:11px;font-weight:400;color:#000;letter-spacing:0.000px;-webkit-text-stroke:0.1px currentColor;">3,000</div>
<div class="t" style="left:1065.74px;top:766.69px;font-size:11px;line-height:11px;font-weight:400;color:#000;letter-spacing:0.000px;-webkit-text-stroke:0.1px currentColor;">4,000</div>
<div class="t" style="left:1230.74px;top:766.69px;font-size:11px;line-height:11px;font-weight:400;color:#000;letter-spacing:0.000px;-webkit-text-stroke:0.1px currentColor;">5,000</div>
<svg width="1338" height="961"><path d="M419.10,667.00 C419.35,664.58 420.27,657.00 420.60,652.50 C420.93,648.00 420.87,642.50 421.10,640.00 C421.33,637.50 421.87,640.00 422.00,637.50 C422.13,633.00 421.70,619.00 421.90,613.00 C422.10,607.00 422.95,613.00 423.20,601.50 C423.45,566.00 423.33,466.92 423.40,400.00 C423.47,333.08 423.50,240.63 423.60,200.00 C423.70,159.37 423.87,159.53 424.00,156.20 C424.13,156.20 424.25,172.70 424.40,180.00 C424.55,187.30 424.70,190.87 424.90,200.00 C425.10,209.13 425.37,224.58 425.60,234.80 C425.83,245.02 426.00,254.23 426.30,261.30 C426.60,268.37 426.98,272.48 427.40,277.20 C427.82,281.92 428.28,286.80 428.80,289.60 C429.32,292.40 429.42,292.23 430.50,294.00 C431.58,295.77 433.77,298.00 435.30,300.20 C436.83,302.40 438.08,304.12 439.70,307.20 C441.32,310.28 443.03,314.12 445.00,318.70 C446.97,323.28 448.17,326.40 451.50,334.70 C454.83,343.00 461.83,359.95 465.00,368.50 C468.17,377.05 468.92,379.68 470.50,386.00 C472.08,392.32 473.15,397.90 474.50,406.40 C475.85,414.90 477.47,426.23 478.60,437.00 C479.73,447.77 480.62,459.72 481.30,471.00 C481.98,482.28 482.25,493.97 482.70,504.70 C483.15,515.43 483.55,525.10 484.00,535.40 C484.45,545.70 484.95,556.57 485.40,566.50 C485.85,576.43 486.25,586.20 486.70,595.00 C487.15,603.80 487.65,607.98 488.10,619.30 C488.55,630.62 489.03,652.67 489.40,662.90 C489.77,673.13 489.87,674.78 490.30,680.70 C490.73,686.62 491.40,692.90 492.00,698.40 C492.60,703.90 493.37,710.52 493.90,713.70 C494.43,716.88 494.78,716.55 495.20,717.50 C495.62,718.45 495.77,718.82 496.40,719.40 C497.03,719.98 498.23,720.85 499.00,721.00 C499.77,721.00 499.73,721.00 501.00,720.30 C502.27,719.50 503.35,718.25 506.60,716.20 C509.85,714.15 516.88,710.28 520.50,708.00 C524.12,705.72 525.33,704.38 528.30,702.50 C531.27,700.62 535.10,698.65 538.30,696.70 C541.50,694.75 544.72,692.82 547.50,690.80 C550.28,688.78 552.92,686.53 555.00,684.60 C557.08,682.67 558.62,681.22 560.00,679.20 C561.38,677.18 562.40,674.73 563.30,672.50 C564.20,670.27 564.77,668.02 565.40,665.80 C566.03,663.58 566.63,661.42 567.10,659.20 C567.57,656.98 567.93,655.00 568.20,652.50 C568.48,650.00 568.52,646.15 568.75,644.20 C568.98,642.25 569.43,644.20 569.60,640.80 C569.77,637.10 569.77,632.47 569.80,622.00 C569.83,611.53 569.62,588.70 569.80,578.00 C569.98,567.30 570.68,578.00 570.90,557.80 C571.12,490.30 570.90,235.97 571.10,173.00 C571.30,173.00 571.77,173.00 572.10,180.00 C572.43,188.67 572.83,211.67 573.10,225.00 C573.37,238.33 573.53,250.50 573.70,260.00 C573.87,269.50 573.97,276.17 574.10,282.00 C574.23,287.83 574.10,291.17 574.50,295.00 C574.90,298.83 575.67,301.95 576.50,305.00 C577.33,308.05 577.88,309.68 579.50,313.30 C581.12,316.92 583.83,321.42 586.20,326.70 C588.57,331.98 591.20,338.90 593.70,345.00 C596.20,351.10 599.12,357.75 601.20,363.30 C603.28,368.85 604.75,373.30 606.20,378.30 C607.65,383.30 608.78,388.30 609.90,393.30 C611.02,398.30 611.98,403.02 612.90,408.30 C613.82,413.58 614.63,419.72 615.40,425.00 C616.17,430.28 616.86,433.33 617.50,440.00 C618.14,446.67 618.75,455.83 619.25,465.00 C619.75,474.17 620.08,485.00 620.50,495.00 C620.92,505.00 621.29,514.17 621.75,525.00 C622.21,535.83 622.71,547.50 623.25,560.00 C623.79,572.50 624.44,588.33 625.00,600.00 C625.56,611.67 626.23,621.88 626.60,630.00 C626.97,638.12 626.93,642.12 627.20,648.70 C627.47,655.28 627.85,663.08 628.20,669.50 C628.55,675.92 628.95,682.33 629.30,687.20 C629.65,692.07 629.87,694.70 630.30,698.70 C630.73,702.70 631.30,707.92 631.90,711.20 C632.50,714.48 633.33,716.87 633.90,718.40 C634.47,719.93 634.82,719.97 635.30,720.40 C635.78,720.83 636.27,720.97 636.80,721.00 C637.33,721.00 637.77,721.00 638.50,720.60 C639.23,720.17 638.67,719.97 641.20,718.40 C643.73,716.83 648.15,714.48 653.70,711.20 C659.25,707.92 668.60,702.35 674.50,698.70 C680.40,695.05 685.45,692.08 689.10,689.30 C692.75,686.52 694.32,684.60 696.40,682.00 C698.48,679.40 700.30,676.47 701.60,673.70 C702.90,670.93 703.52,668.35 704.20,665.40 C704.88,662.45 705.27,659.30 705.70,656.00 C706.13,652.70 706.37,649.93 706.80,645.60 C707.23,641.27 707.95,645.60 708.30,630.00 C708.65,609.07 708.73,555.00 708.90,520.00 C709.07,485.00 709.13,477.83 709.30,420.00 C709.47,362.17 709.63,213.00 709.90,173.00 C710.17,173.00 710.57,173.00 710.90,180.00 C711.23,188.67 711.63,211.67 711.90,225.00 C712.17,238.33 712.33,250.50 712.50,260.00 C712.67,269.50 712.77,276.17 712.90,282.00 C713.03,287.83 712.90,291.17 713.30,295.00 C713.70,298.83 714.47,301.95 715.30,305.00 C716.13,308.05 716.68,309.68 718.30,313.30 C719.92,316.92 722.63,321.42 725.00,326.70 C727.37,331.98 730.00,338.90 732.50,345.00 C735.00,351.10 737.92,357.75 740.00,363.30 C742.08,368.85 743.55,373.30 745.00,378.30 C746.45,383.30 747.58,388.30 748.70,393.30 C749.82,398.30 750.78,403.02 751.70,408.30 C752.62,413.58 753.43,419.72 754.20,425.00 C754.97,430.28 755.66,433.33 756.30,440.00 C756.94,446.67 757.55,455.83 758.05,465.00 C758.55,474.17 758.88,485.00 759.30,495.00 C759.72,505.00 760.09,514.17 760.55,525.00 C761.01,535.83 761.51,547.50 762.05,560.00 C762.59,572.50 763.24,588.33 763.80,600.00 C764.36,611.67 765.03,621.88 765.40,630.00 C765.77,638.12 765.73,642.12 766.00,648.70 C766.27,655.28 766.65,663.08 767.00,669.50 C767.35,675.92 767.75,682.33 768.10,687.20 C768.45,692.07 768.67,694.70 769.10,698.70 C769.53,702.70 770.10,707.92 770.70,711.20 C771.30,714.48 772.13,716.87 772.70,718.40 C773.27,719.93 773.62,719.97 774.10,720.40 C774.58,720.83 775.07,720.97 775.60,721.00 C776.13,721.00 776.57,721.00 777.30,720.60 C778.03,720.17 777.47,719.97 780.00,718.40 C782.53,716.83 786.95,714.48 792.50,711.20 C798.05,707.92 807.40,702.35 813.30,698.70 C819.20,695.05 824.25,692.08 827.90,689.30 C831.55,686.52 833.12,684.60 835.20,682.00 C837.28,679.40 839.10,676.47 840.40,673.70 C841.70,670.93 842.32,668.35 843.00,665.40 C843.68,662.45 844.07,659.30 844.50,656.00 C844.93,652.70 845.17,649.93 845.60,645.60 C846.03,641.27 846.75,645.60 847.10,630.00 C847.45,609.07 847.53,555.00 847.70,520.00 C847.87,485.00 848.03,477.83 848.10,420.00 C848.17,362.17 847.93,213.00 848.10,173.00 C848.27,173.00 848.77,173.00 849.10,180.00 C849.43,188.67 849.83,211.67 850.10,225.00 C850.37,238.33 850.53,250.50 850.70,260.00 C850.87,269.50 850.97,276.17 851.10,282.00 C851.23,287.83 851.10,291.17 851.50,295.00 C851.90,298.83 852.67,301.95 853.50,305.00 C854.33,308.05 854.88,309.68 856.50,313.30 C858.12,316.92 860.83,321.42 863.20,326.70 C865.57,331.98 868.20,338.90 870.70,345.00 C873.20,351.10 876.12,357.75 878.20,363.30 C880.28,368.85 881.75,373.30 883.20,378.30 C884.65,383.30 885.78,388.30 886.90,393.30 C888.02,398.30 888.98,403.02 889.90,408.30 C890.82,413.58 891.63,419.72 892.40,425.00 C893.17,430.28 893.86,433.33 894.50,440.00 C895.14,446.67 895.75,455.83 896.25,465.00 C896.75,474.17 897.08,485.00 897.50,495.00 C897.92,505.00 898.29,514.17 898.75,525.00 C899.21,535.83 899.71,547.50 900.25,560.00 C900.79,572.50 901.44,588.33 902.00,600.00 C902.56,611.67 903.23,621.88 903.60,630.00 C903.97,638.12 903.93,642.12 904.20,648.70 C904.47,655.28 904.85,663.08 905.20,669.50 C905.55,675.92 905.95,682.33 906.30,687.20 C906.65,692.07 906.87,694.70 907.30,698.70 C907.73,702.70 908.30,707.92 908.90,711.20 C909.50,714.48 910.33,716.87 910.90,718.40 C911.47,719.93 911.82,719.97 912.30,720.40 C912.78,720.83 913.27,720.97 913.80,721.00 C914.33,721.00 914.77,721.00 915.50,720.60 C916.23,720.17 915.67,719.97 918.20,718.40 C920.73,716.83 925.15,714.48 930.70,711.20 C936.25,707.92 945.60,702.35 951.50,698.70 C957.40,695.05 962.45,692.08 966.10,689.30 C969.75,686.52 971.32,684.60 973.40,682.00 C975.48,679.40 977.30,676.47 978.60,673.70 C979.90,670.93 980.52,668.35 981.20,665.40 C981.88,662.45 982.27,659.30 982.70,656.00 C983.13,652.70 983.37,649.93 983.80,645.60 C984.23,641.27 984.95,645.60 985.30,630.00 C985.65,609.07 985.73,555.00 985.90,520.00 C986.07,485.00 986.17,477.83 986.30,420.00 C986.43,362.17 986.47,213.00 986.70,173.00 C986.93,173.00 987.37,173.00 987.70,180.00 C988.03,188.67 988.43,211.67 988.70,225.00 C988.97,238.33 989.13,250.50 989.30,260.00 C989.47,269.50 989.57,276.17 989.70,282.00 C989.83,287.83 989.70,291.17 990.10,295.00 C990.50,298.83 991.27,301.95 992.10,305.00 C992.93,308.05 993.48,309.68 995.10,313.30 C996.72,316.92 999.43,321.42 1001.80,326.70 C1004.17,331.98 1006.80,338.90 1009.30,345.00 C1011.80,351.10 1014.72,357.75 1016.80,363.30 C1018.88,368.85 1020.35,373.30 1021.80,378.30 C1023.25,383.30 1024.38,388.30 1025.50,393.30 C1026.62,398.30 1027.58,403.02 1028.50,408.30 C1029.42,413.58 1030.23,419.72 1031.00,425.00 C1031.77,430.28 1032.46,433.33 1033.10,440.00 C1033.74,446.67 1034.35,455.83 1034.85,465.00 C1035.35,474.17 1035.68,485.00 1036.10,495.00 C1036.52,505.00 1036.89,514.17 1037.35,525.00 C1037.81,535.83 1038.31,547.50 1038.85,560.00 C1039.39,572.50 1040.04,588.33 1040.60,600.00 C1041.16,611.67 1041.83,621.88 1042.20,630.00 C1042.57,638.12 1042.53,642.12 1042.80,648.70 C1043.07,655.28 1043.45,663.08 1043.80,669.50 C1044.15,675.92 1044.55,682.33 1044.90,687.20 C1045.25,692.07 1045.47,694.70 1045.90,698.70 C1046.33,702.70 1046.90,707.92 1047.50,711.20 C1048.10,714.48 1048.93,716.87 1049.50,718.40 C1050.07,719.93 1050.42,719.97 1050.90,720.40 C1051.38,720.83 1051.87,720.97 1052.40,721.00 C1052.93,721.00 1053.37,721.00 1054.10,720.60 C1054.83,720.17 1054.27,719.97 1056.80,718.40 C1059.33,716.83 1063.75,714.48 1069.30,711.20 C1074.85,707.92 1084.20,702.35 1090.10,698.70 C1096.00,695.05 1101.05,692.08 1104.70,689.30 C1108.35,686.52 1109.92,684.60 1112.00,682.00 C1114.08,679.40 1115.90,676.47 1117.20,673.70 C1118.50,670.93 1119.12,668.35 1119.80,665.40 C1120.48,662.45 1120.87,659.30 1121.30,656.00 C1121.73,652.70 1121.97,649.93 1122.40,645.60 C1122.83,641.27 1123.55,645.60 1123.90,630.00 C1124.25,609.07 1124.33,555.00 1124.50,520.00 C1124.67,485.00 1124.67,477.83 1124.90,420.00 C1125.13,362.17 1125.57,213.00 1125.90,173.00 C1126.23,173.00 1126.57,173.00 1126.90,180.00 C1127.23,188.67 1127.63,211.67 1127.90,225.00 C1128.17,238.33 1128.33,250.50 1128.50,260.00 C1128.67,269.50 1128.77,276.17 1128.90,282.00 C1129.03,287.83 1128.90,291.17 1129.30,295.00 C1129.70,298.83 1130.47,301.95 1131.30,305.00 C1132.13,308.05 1132.68,309.68 1134.30,313.30 C1135.92,316.92 1138.63,321.42 1141.00,326.70 C1143.37,331.98 1146.00,338.90 1148.50,345.00 C1151.00,351.10 1153.92,357.75 1156.00,363.30 C1158.08,368.85 1159.55,373.30 1161.00,378.30 C1162.45,383.30 1163.58,388.30 1164.70,393.30 C1165.82,398.30 1166.78,403.02 1167.70,408.30 C1168.62,413.58 1169.43,419.72 1170.20,425.00 C1170.97,430.28 1171.66,433.33 1172.30,440.00 C1172.94,446.67 1173.55,455.83 1174.05,465.00 C1174.55,474.17 1174.88,485.00 1175.30,495.00 C1175.72,505.00 1176.09,514.17 1176.55,525.00 C1177.01,535.83 1177.51,547.50 1178.05,560.00 C1178.59,572.50 1179.24,588.33 1179.80,600.00 C1180.36,611.67 1181.03,621.88 1181.40,630.00 C1181.77,638.12 1181.73,642.12 1182.00,648.70 C1182.27,655.28 1182.65,663.08 1183.00,669.50 C1183.35,675.92 1183.75,682.33 1184.10,687.20 C1184.45,692.07 1184.67,694.70 1185.10,698.70 C1185.53,702.70 1186.10,707.92 1186.70,711.20 C1187.30,714.48 1188.13,716.87 1188.70,718.40 C1189.27,719.93 1189.62,719.97 1190.10,720.40 C1190.58,720.83 1191.07,720.97 1191.60,721.00 C1192.13,721.00 1192.57,721.00 1193.30,720.60 C1194.03,720.17 1193.47,719.97 1196.00,718.40 C1198.53,716.83 1202.95,714.48 1208.50,711.20 C1214.05,707.92 1223.40,702.35 1229.30,698.70 C1235.20,695.05 1241.38,691.00 1243.90,689.30 C1246.42,688.50 1244.32,688.63 1244.40,688.50" fill="none" stroke="#2a2aa2" stroke-width="1.3" stroke-linejoin="round"/></svg>
<div class="r" style="left:78px;top:785px;width:1182px;height:76px;background:#ececec;border:1px solid #b5b5b5;"></div>
<div class="r" style="left:79px;top:786px;width:1180px;height:70px;background:#fff;"></div>
<div class="r" style="left:79px;top:856px;width:1180px;height:1px;background:#b5b5b5;"></div>
<div style="position:absolute;left:0;top:0;width:1338px;height:961px;clip-path:inset(786px 79px 105px 79px);">
<div class="t" style="left:84.50px;top:778.00px;font-size:13px;line-height:13px;font-weight:700;color:#000;letter-spacing:1.013px;-webkit-text-stroke:0.1px currentColor;">/Users/dnic019/pmr2/cmbe13-scenario2-take2/n62.cellml</div>
</div>
<div class="t" style="left:100.00px;top:794.00px;font-size:13px;line-height:13px;font-weight:700;color:#000;letter-spacing:0.309px;-webkit-text-stroke:0.1px currentColor;">Runtime:</div>
<div class="t" style="left:162.40px;top:794.00px;font-size:13px;line-height:13px;font-weight:400;color:#1f8a1f;letter-spacing:0.153px;-webkit-text-stroke:0.25px currentColor;">valid</div>
<div class="t" style="left:190.50px;top:794.00px;font-size:13px;line-height:13px;font-weight:400;color:#000;letter-spacing:0.000px;-webkit-text-stroke:0.25px currentColor;">.</div>
<div class="t" style="left:100.00px;top:810.00px;font-size:13px;line-height:13px;font-weight:700;color:#000;letter-spacing:0.407px;-webkit-text-stroke:0.1px currentColor;">Model type:</div>
<div class="t" style="left:180.50px;top:810.00px;font-size:13px;line-height:13px;font-weight:400;color:#1a1a8c;letter-spacing:-0.723px;-webkit-text-stroke:0.25px currentColor;">ODE</div>
<div class="t" style="left:206.80px;top:810.00px;font-size:13px;line-height:13px;font-weight:400;color:#000;letter-spacing:0.000px;-webkit-text-stroke:0.25px currentColor;">.</div>
<div class="t" style="left:100.00px;top:826.00px;font-size:13px;line-height:13px;font-weight:700;color:#000;letter-spacing:0.392px;-webkit-text-stroke:0.1px currentColor;">Simulation time:</div>
<div class="t" style="left:212.40px;top:826.00px;font-size:13px;line-height:13px;font-weight:400;color:#1a1a8c;letter-spacing:0.307px;-webkit-text-stroke:0.25px currentColor;">0.025 s using CVODE</div>
<div class="t" style="left:345.60px;top:826.00px;font-size:13px;line-height:13px;font-weight:400;color:#000;letter-spacing:0.000px;-webkit-text-stroke:0.25px currentColor;">.</div>
<div class="t" style="left:63.30px;top:865.00px;font-size:13px;line-height:13px;font-weight:400;color:#1a1a1a;letter-spacing:0.574px;-webkit-text-stroke:0.25px currentColor;">Run the simulation</div>
<svg width="1338" height="961"><path d="M665.5,782.5 L668,780 L670.5,782.5" fill="none" stroke="#9a9a9a" stroke-width="1"/><path d="M378,441 L375.2,443.5 L377.5,446" fill="none" stroke="#a0a0a0" stroke-width="1"/></svg>
<div class="r" style="left:58px;top:382px;width:20px;height:64px;background:linear-gradient(90deg,#f2f2f2,#ffffff 40%,#f0f0f0);border:1px solid #b0b0b0;border-right:none;border-bottom:none;border-radius:5px 5px 0 0;"></div>
<div class="r" style="left:58px;top:446px;width:20px;height:90px;background:linear-gradient(90deg,#7c7c7c,#8c8c8c 50%,#828282);border:1px solid #6a6a6a;border-right:none;border-top:none;border-radius:0 0 5px 5px;"></div>
<div class="t" style="left:68px;top:413px;font-size:13px;line-height:13px;transform:translate(-50%,-50%) rotate(-90deg);color:#000;letter-spacing:0.35px;-webkit-text-stroke:0.2px currentColor;">Editing</div>
<div class="t" style="left:68px;top:491px;font-size:13px;line-height:13px;transform:translate(-50%,-50%) rotate(-90deg);color:#f0f0f0;letter-spacing:0.45px;-webkit-text-stroke:0;">Simulation</div>
<div class="r" style="left:1260px;top:395px;width:11px;height:19px;background:#e6e6e6;border:1px solid #c9c9c9;border-left:none;border-top:none;border-radius:0 3px 0 0;"></div>
<div class="r" style="left:1260px;top:503px;width:11px;height:19px;background:#e6e6e6;border:1px solid #c9c9c9;border-left:none;border-radius:0 0 3px 0;"></div>
<div class="r" style="left:1260px;top:416px;width:21px;height:86px;background:linear-gradient(90deg,#8e8e8e,#858585);border:1px solid #6c6c6c;border-radius:4px;"></div>
<div class="t" style="left:1270.5px;top:459px;font-size:13px;line-height:13px;transform:translate(-50%,-50%) rotate(90deg);color:#f4f4f4;letter-spacing:0.5px;-webkit-text-stroke:0;">Single Cell</div>
<svg width="1338" height="961"><g stroke="#a0a0a0" stroke-width="1"><path d="M1268,881 L1280,869 M1272,881 L1280,873 M1276,881 L1280,877"/></g></svg>
</body></html>
